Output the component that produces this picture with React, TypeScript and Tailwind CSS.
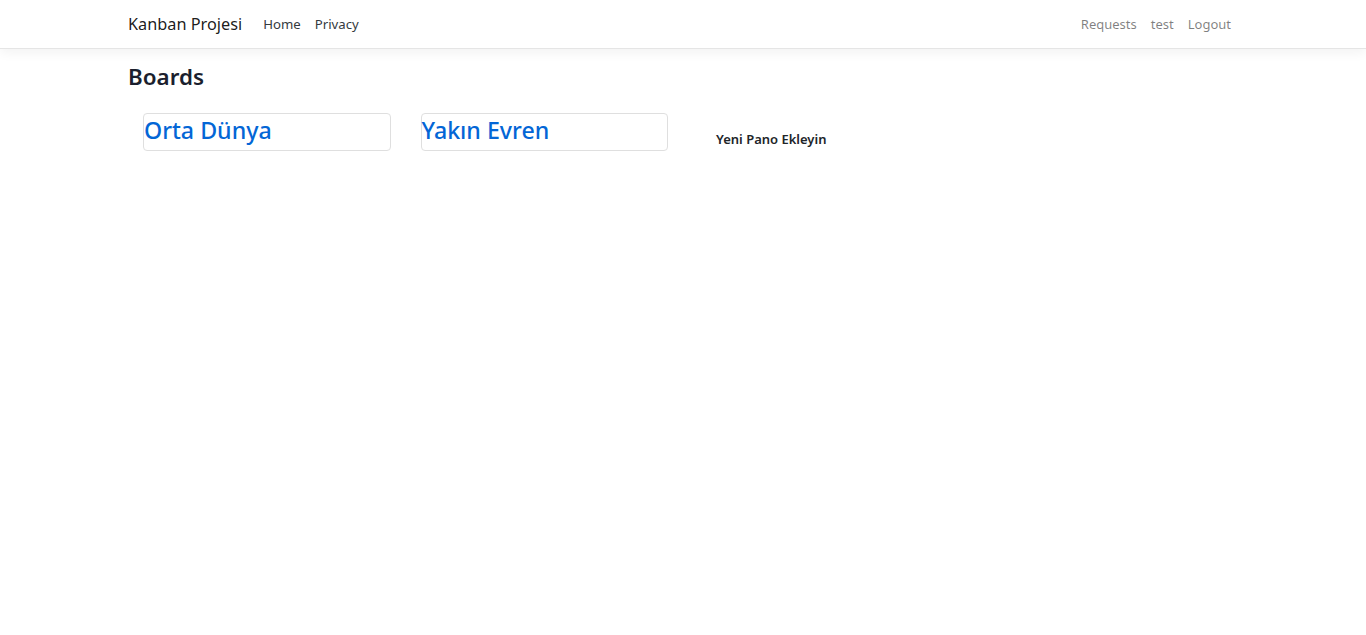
import React from 'react';

const boards = [
  { id: 1, title: 'Orta Dünya' },
  { id: 2, title: 'Yakın Evren' },
];

const font = { fontFamily: '"Noto Sans", "Open Sans", sans-serif' };

export default function App() {
  return (
    <div className="min-h-[635px] bg-white text-[#212529]" style={font}>
      <header className="h-[49px] border-b border-[#e5e5e5] bg-white shadow-[0_3.5px_10.5px_rgba(0,0,0,0.05)]">
        <nav className="mx-auto flex h-full w-[1140px] items-center px-[15px] pt-px">
          <a className="mr-[14px] text-[16.3px] text-black/90">Kanban Projesi</a>
          <ul className="flex text-[13.2px] text-[#343a40]">
            <li className="px-[7px]">Home</li>
            <li className="px-[7px]">Privacy</li>
          </ul>
          <ul className="ml-auto flex text-[13px] text-black/50">
            <li className="px-[7px]">Requests</li>
            <li className="px-[7px]">test</li>
            <li className="px-[7px]">Logout</li>
          </ul>
        </nav>
      </header>

      <main className="mx-auto w-[1140px] px-[15px] pt-[15px]">
        <h3 className="text-[22.4px] font-semibold leading-[1.2] text-[#1b1f2e]">Boards</h3>
        <div className="mt-[22px] flex">
          {boards.map((b) => (
            <div key={b.id} className="w-[277.5px] px-[15px]">
              <div className="h-[38px] rounded-[4px] border border-[#dfdfdf]">
                <h2 className="text-[23.2px] font-medium leading-[32px] text-[#0366d6]">{b.title}</h2>
              </div>
            </div>
          ))}
          <div className="w-[277.5px] px-[15px]">
            <button className="mt-[17px] ml-[18px] text-[13px] font-semibold text-[#212529]">
              Yeni Pano Ekleyin
            </button>
          </div>
        </div>
      </main>
    </div>
  );
}
